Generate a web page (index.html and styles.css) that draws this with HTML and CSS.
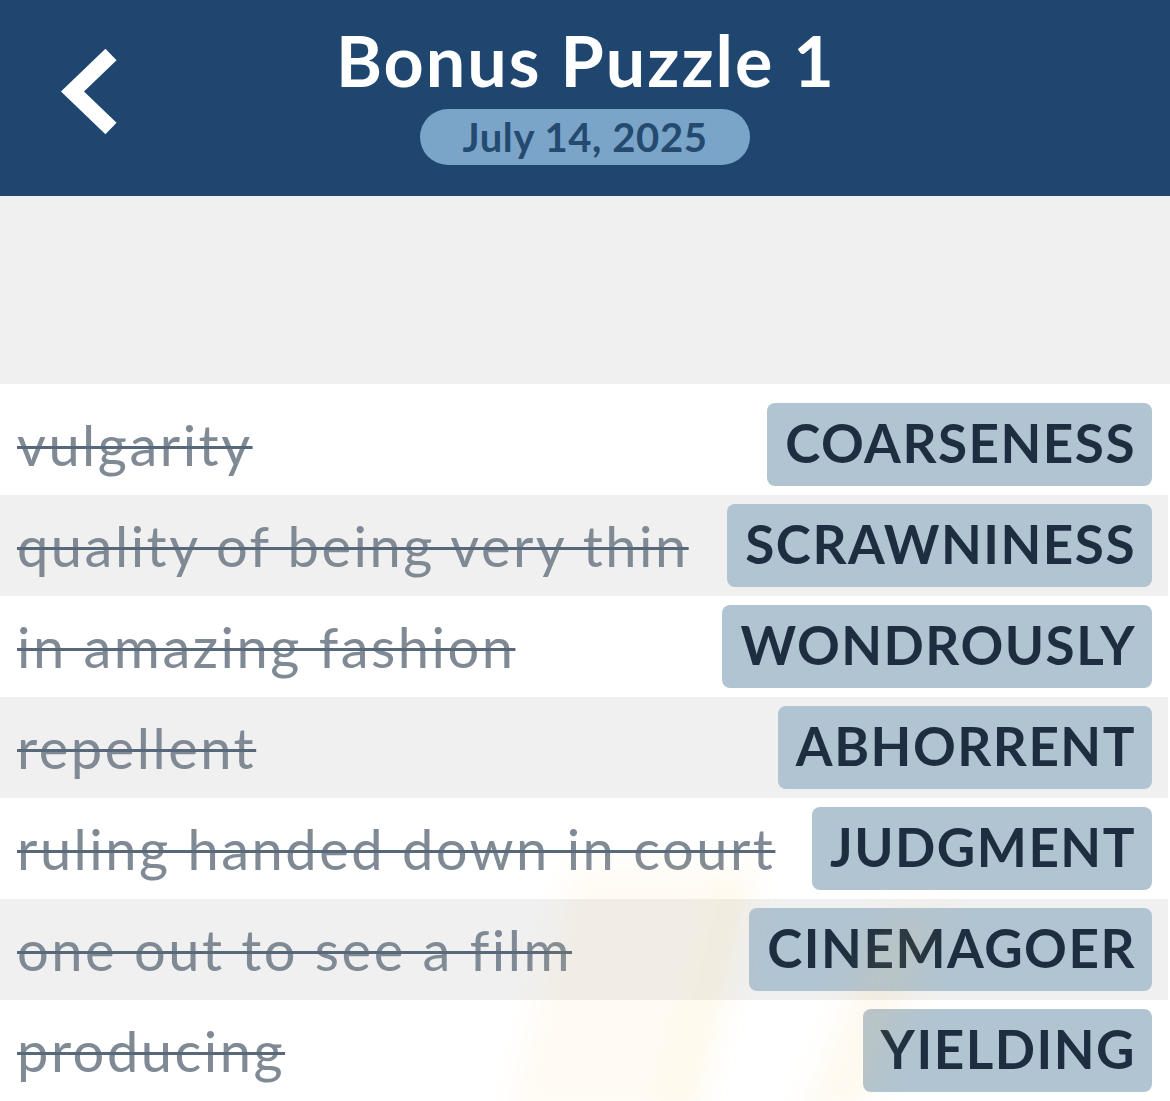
FILE: index.html
```
<!DOCTYPE html>
<html lang="en">
<head>
<meta charset="utf-8">
<title>Bonus Puzzle 1</title>
<link rel="stylesheet" href="styles.css">
</head>
<body>
<header class="topbar">
  <div class="topbar-left">
    <svg class="back" width="80" height="110" viewBox="0 0 80 110" aria-label="Back">
      <polyline points="61,14.5 22.5,51.5 61,88.5" fill="none" stroke="#ffffff" stroke-width="16" stroke-linecap="butt" stroke-linejoin="miter"/>
    </svg>
  </div>
  <div class="topbar-center">
    <h1 class="title">Bonus Puzzle 1</h1>
    <div class="date-pill">July 14, 2025</div>
  </div>
  <div class="topbar-right"></div>
</header>

<section class="blank"></section>

<main class="list">
  <div class="glow" aria-hidden="true">
    <span class="ray ray-a"></span>
    <span class="ray ray-b"></span>
    <span class="ray ray-c"></span>
  </div>
  <div class="row row-odd"><span class="clue">vulgarity</span><span class="answer">COARSENESS</span></div>
  <div class="row row-even"><span class="clue">quality of being very thin</span><span class="answer">SCRAWNINESS</span></div>
  <div class="row row-odd"><span class="clue">in amazing fashion</span><span class="answer">WONDROUSLY</span></div>
  <div class="row row-even"><span class="clue">repellent</span><span class="answer">ABHORRENT</span></div>
  <div class="row row-odd"><span class="clue">ruling handed down in court</span><span class="answer">JUDGMENT</span></div>
  <div class="row row-even"><span class="clue">one out to see a film</span><span class="answer">CINEMAGOER</span></div>
  <div class="row row-odd"><span class="clue">producing</span><span class="answer">YIELDING</span></div>
</main>
</body>
</html>
```

FILE: styles.css
```
* { box-sizing: border-box; }

html, body {
  margin: 0;
  padding: 0;
  background: #ffffff;
  font-family: "Lato", "Noto Sans", "Liberation Sans", sans-serif;
  overflow: hidden;
}

.topbar {
  height: 196px;
  background: #1e466f;
  display: grid;
  grid-template-columns: 1fr auto 1fr;
  align-items: start;
}

.topbar-left {
  padding: 40px 0 0 50px;
}

.back { display: block; }

.topbar-center {
  display: flex;
  flex-direction: column;
  align-items: center;
  padding-top: 20px;
}

.title {
  margin: 0;
  color: #ffffff;
  font-size: 70px;
  line-height: 80px;
  font-weight: 700;
  letter-spacing: 2px;
  padding-left: 2px;
}

.date-pill {
  margin-top: 9px;
  width: 330px;
  height: 56px;
  border-radius: 28px;
  background: #7aa4c8;
  color: #244a70;
  font-size: 40px;
  font-weight: 700;
  line-height: 56px;
  letter-spacing: 0.6px;
  text-align: center;
}

.blank {
  height: 188px;
  background: #f0f0f0;
}

.list {
  position: relative;
  padding-top: 10px;
  margin-right: 2px;
}

.row {
  position: relative;
  height: 101px;
  display: flex;
  align-items: center;
  justify-content: space-between;
  padding: 0 16px 0 17px;
}

.row-odd { background: #ffffff; }
.row-even { background: #f0f0f0; }

.clue {
  color: #808a95;
  font-size: 56px;
  font-weight: 400;
  letter-spacing: 2.5px;
  white-space: nowrap;
  text-decoration: line-through;
  text-decoration-color: #56687a;
  text-decoration-thickness: 3px;
}

.answer {
  background: #b1c4d1;
  color: #1c2e40;
  font-size: 53px;
  font-weight: 700;
  letter-spacing: 1.5px;
  height: 83px;
  line-height: 79px;
  padding: 0 16px 4px 18px;
  border-radius: 8px;
  white-space: nowrap;
  margin-left: 28px;
}

.glow {
  position: absolute;
  inset: 0;
  pointer-events: none;
  z-index: 2;
  overflow: hidden;
}

.ray {
  position: absolute;
  display: block;
  filter: blur(16px);
}

.ray-a {
  left: 540px;
  top: 480px;
  width: 150px;
  height: 250px;
  background: rgba(255, 214, 120, 0.09);
  transform: skewX(-14deg);
}

.ray-b {
  left: 690px;
  top: 490px;
  width: 30px;
  height: 250px;
  background: rgba(255, 190, 60, 0.12);
  transform: skewX(-14deg);
}

.ray-c {
  left: 840px;
  top: 530px;
  width: 60px;
  height: 210px;
  background: rgba(255, 205, 90, 0.09);
  transform: skewX(-22deg);
}
```
